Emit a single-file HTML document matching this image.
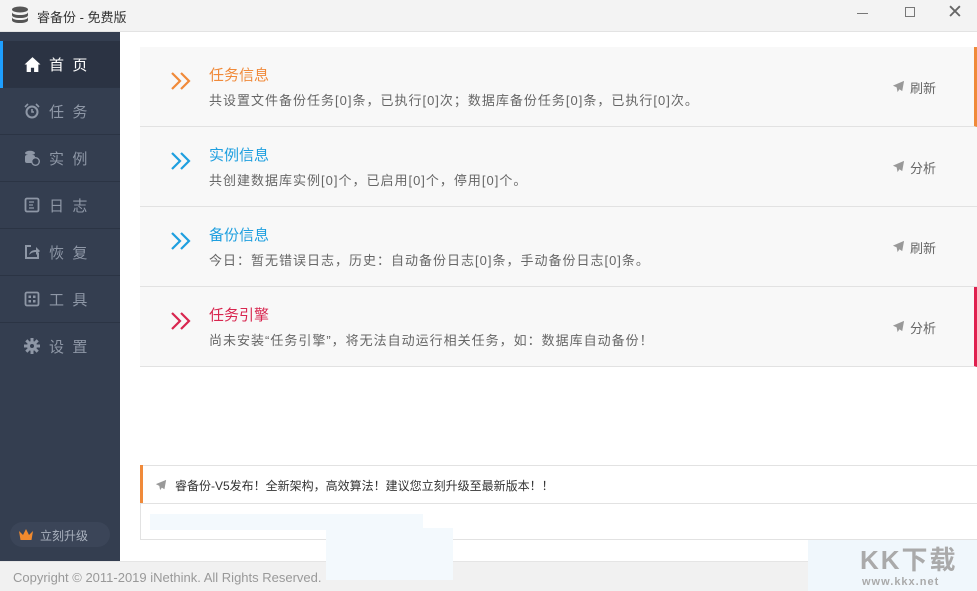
<!DOCTYPE html>
<html><head><meta charset="utf-8"><style>
*{margin:0;padding:0;box-sizing:border-box}
body{width:977px;height:591px;overflow:hidden;background:#fff;font-family:"Liberation Sans","Noto Sans CJK SC",sans-serif;position:relative;font-size:13px;color:#555}
.title{position:absolute;left:0;top:0;width:977px;height:32px;background:#f3f3f3;border-bottom:1px solid #e3e3e3}
.title .t{position:absolute;left:37px;top:7px;font-size:13px;color:#333}
.side{position:absolute;left:0;top:32px;width:120px;height:529px;background:#343e50}
.mi{position:absolute;left:0;width:120px;height:47px;border-bottom:1px solid #2b3444;color:#8e97a6;font-size:15px;letter-spacing:0}
.mi .lbl{position:absolute;left:49px;top:13px;word-spacing:0}
.mi svg{position:absolute;left:24px;top:15px}
.act{background:#2b3343;color:#fff}
.act:before{content:"";position:absolute;left:0;top:0;width:3px;height:47px;background:#1e9fff}
.up{position:absolute;left:10px;top:490px;width:100px;height:25px;border-radius:13px;background:#3b4558;color:#a9b1be;font-size:12px}
.card{position:absolute;left:140px;width:837px;height:80px;background:#f8f8f8;border-bottom:1px solid #e2e2e2}
.card .h{position:absolute;left:69px;top:17px;font-size:15px}
.card .d{position:absolute;left:69px;top:43px;font-size:13px;color:#666;letter-spacing:1px;white-space:nowrap}
.card .a{position:absolute;left:30px;top:24px}
.card .r{position:absolute;left:752px;top:31px;font-size:13px;color:#666}
.card .r svg{position:absolute;left:0;top:2px}
.card .r span{position:absolute;left:18px;top:0;white-space:nowrap}
.note{position:absolute;left:140px;top:465px;width:837px;height:75px;border:1px solid #e2e2e2;border-right:none}
.foot{position:absolute;left:0;top:561px;width:977px;height:30px;background:#f1f1f1;border-top:1px solid #e5e5e5}
</style></head><body>
<div class="title">
<svg style="position:absolute;left:11px;top:6px" width="18" height="18" viewBox="0 0 18 18"><g fill="#555"><ellipse cx="9" cy="3.5" rx="8" ry="3"/><path d="M1 6c0 2 3.5 3 8 3s8-1 8-3v3c0 2-3.5 3-8 3s-8-1-8-3z"/><path d="M1 11c0 2 3.5 3 8 3s8-1 8-3v3c0 2-3.5 3-8 3s-8-1-8-3z"/></g></svg>
<div class="t">睿备份 - 免费版</div>
<div style="position:absolute;left:857px;top:13px;width:11px;height:1px;background:#777"></div>
<div style="position:absolute;left:905px;top:7px;width:10px;height:10px;border:1px solid #777"></div>
<div style="position:absolute;left:947px;top:1px;font-size:19px;color:#666">✕</div>
</div>
<div class="side">
<div class="mi act" style="top:9px"><svg width="17" height="17" viewBox="0 0 16 16"><path fill="#fff" d="M8 1L0.5 8h2v7h4v-4h3v4h4V8h2z"/></svg><span class="lbl">首&nbsp;&nbsp;页</span></div>
<div class="mi" style="top:56px"><svg width="16" height="16" viewBox="0 0 16 16"><circle cx="8" cy="9" r="5.5" fill="none" stroke="#8e97a6" stroke-width="2"/><path d="M1 4l3-3M15 4l-3-3M8 6v3h2" stroke="#8e97a6" stroke-width="1.6" fill="none"/></svg><span class="lbl">任&nbsp;&nbsp;务</span></div>
<div class="mi" style="top:103px"><svg width="16" height="16" viewBox="0 0 16 16"><ellipse cx="6" cy="3" rx="5" ry="2.2" fill="#8e97a6"/><rect x="1" y="5" width="10" height="8" rx="2" fill="#8e97a6"/><circle cx="11.5" cy="11.5" r="3.8" fill="#343e50" stroke="#8e97a6" stroke-width="1.4"/></svg><span class="lbl">实&nbsp;&nbsp;例</span></div>
<div class="mi" style="top:150px"><svg width="16" height="16" viewBox="0 0 16 16"><rect x="1.5" y="1.5" width="13" height="13" rx="1.5" fill="none" stroke="#8e97a6" stroke-width="1.8"/><path d="M5 5h5M5 8h4M5 11h5" stroke="#8e97a6" stroke-width="1.3"/></svg><span class="lbl">日&nbsp;&nbsp;志</span></div>
<div class="mi" style="top:197px"><svg width="16" height="16" viewBox="0 0 16 16"><path d="M7 2H2v12h12V9" fill="none" stroke="#8e97a6" stroke-width="2"/><path d="M5 11c1-4 4-5 7-5V3l4 4-4 4V8c-3 0-5 1-7 3z" fill="#8e97a6"/></svg><span class="lbl">恢&nbsp;&nbsp;复</span></div>
<div class="mi" style="top:244px"><svg width="16" height="16" viewBox="0 0 16 16"><rect x="1.5" y="1.5" width="13" height="13" rx="1.5" fill="none" stroke="#8e97a6" stroke-width="1.8"/><rect x="4.5" y="4.5" width="2.5" height="2.5" fill="#8e97a6"/><rect x="9" y="4.5" width="2.5" height="2.5" fill="#8e97a6"/><rect x="4.5" y="9" width="2.5" height="2.5" fill="#8e97a6"/><rect x="9" y="9" width="2.5" height="2.5" fill="#8e97a6"/></svg><span class="lbl">工&nbsp;&nbsp;具</span></div>
<div class="mi" style="top:291px;border:none"><svg width="16" height="16" viewBox="0 0 16 16"><circle cx="8" cy="8" r="5" fill="#8e97a6"/><path d="M8 0v16M0 8h16M2.3 2.3l11.4 11.4M13.7 2.3L2.3 13.7" stroke="#8e97a6" stroke-width="3"/><circle cx="8" cy="8" r="2" fill="#343e50"/></svg><span class="lbl">设&nbsp;&nbsp;置</span></div>
<div class="up"><svg style="position:absolute;left:8px;top:6px" width="16" height="13" viewBox="0 0 16 13"><path d="M1 3l4 4 3-6 3 6 4-4-1.5 9h-11z" fill="#f28a2e"/></svg><span style="position:absolute;left:30px;top:5px">立刻升级</span></div>
</div>

<div class="card" style="top:47px;border-right:3px solid #f08a3a">
<svg class="a" width="22" height="20" viewBox="0 0 22 20"><path d="M2 2l8 8-8 8M11 2l8 8-8 8" fill="none" stroke="#f08a3a" stroke-width="2.2"/></svg>
<div class="h" style="color:#f08a3a">任务信息</div><div class="d">共设置文件备份任务[0]条，已执行[0]次；数据库备份任务[0]条，已执行[0]次。</div>
<div class="r"><svg width="13" height="13" viewBox="0 0 14 14"><path d="M13 1L1 6l4 2 1 5 2-3 3 2z" fill="#999"/></svg><span>刷新</span></div></div>
<div class="card" style="top:127px">
<svg class="a" width="22" height="20" viewBox="0 0 22 20"><path d="M2 2l8 8-8 8M11 2l8 8-8 8" fill="none" stroke="#1e9fdf" stroke-width="2.2"/></svg>
<div class="h" style="color:#1e9fdf">实例信息</div><div class="d">共创建数据库实例[0]个，已启用[0]个，停用[0]个。</div>
<div class="r"><svg width="13" height="13" viewBox="0 0 14 14"><path d="M13 1L1 6l4 2 1 5 2-3 3 2z" fill="#999"/></svg><span>分析</span></div></div>
<div class="card" style="top:207px">
<svg class="a" width="22" height="20" viewBox="0 0 22 20"><path d="M2 2l8 8-8 8M11 2l8 8-8 8" fill="none" stroke="#1e9fdf" stroke-width="2.2"/></svg>
<div class="h" style="color:#1e9fdf">备份信息</div><div class="d">今日：暂无错误日志，历史：自动备份日志[0]条，手动备份日志[0]条。</div>
<div class="r"><svg width="13" height="13" viewBox="0 0 14 14"><path d="M13 1L1 6l4 2 1 5 2-3 3 2z" fill="#999"/></svg><span>刷新</span></div></div>
<div class="card" style="top:287px;border-right:3px solid #e0204f">
<svg class="a" width="22" height="20" viewBox="0 0 22 20"><path d="M2 2l8 8-8 8M11 2l8 8-8 8" fill="none" stroke="#d8264f" stroke-width="2.2"/></svg>
<div class="h" style="color:#d8264f">任务引擎</div><div class="d">尚未安装“任务引擎”，将无法自动运行相关任务，如：数据库自动备份！</div>
<div class="r"><svg width="13" height="13" viewBox="0 0 14 14"><path d="M13 1L1 6l4 2 1 5 2-3 3 2z" fill="#999"/></svg><span>分析</span></div></div>

<div class="note">
<div style="position:absolute;left:-1px;top:-1px;width:3px;height:38px;background:#f08a3a"></div>
<div style="position:absolute;left:0;top:37px;width:836px;height:1px;background:#e2e2e2"></div>
<svg style="position:absolute;left:14px;top:13px" width="12" height="12" viewBox="0 0 14 14"><path d="M13 1L1 6l4 2 1 5 2-3 3 2z" fill="#999"/></svg>
<div style="position:absolute;left:34px;top:11px;font-size:12px;color:#333">睿备份-V5发布！全新架构，高效算法！建议您立刻升级至最新版本！！</div>
<div style="position:absolute;left:9px;top:48px;width:273px;height:16px;background:#f3f9fd"></div>
</div>
<div class="foot"><div style="position:absolute;left:13px;top:8px;font-size:13px;color:#999">Copyright © 2011-2019 iNethink. All Rights Reserved.</div></div>
<div style="position:absolute;left:326px;top:528px;width:127px;height:52px;background:#f3f9fd"></div>
<div style="position:absolute;left:808px;top:540px;width:169px;height:51px;background:#f0f7fc"></div>
<div style="position:absolute;left:860px;top:540px;font-size:26px;font-weight:bold;color:#aaa;letter-spacing:2px">KK下载</div>
<div style="position:absolute;left:862px;top:576px;font-size:11px;font-weight:bold;color:#aaa;letter-spacing:1px">www.kkx.net</div>
</body></html>
